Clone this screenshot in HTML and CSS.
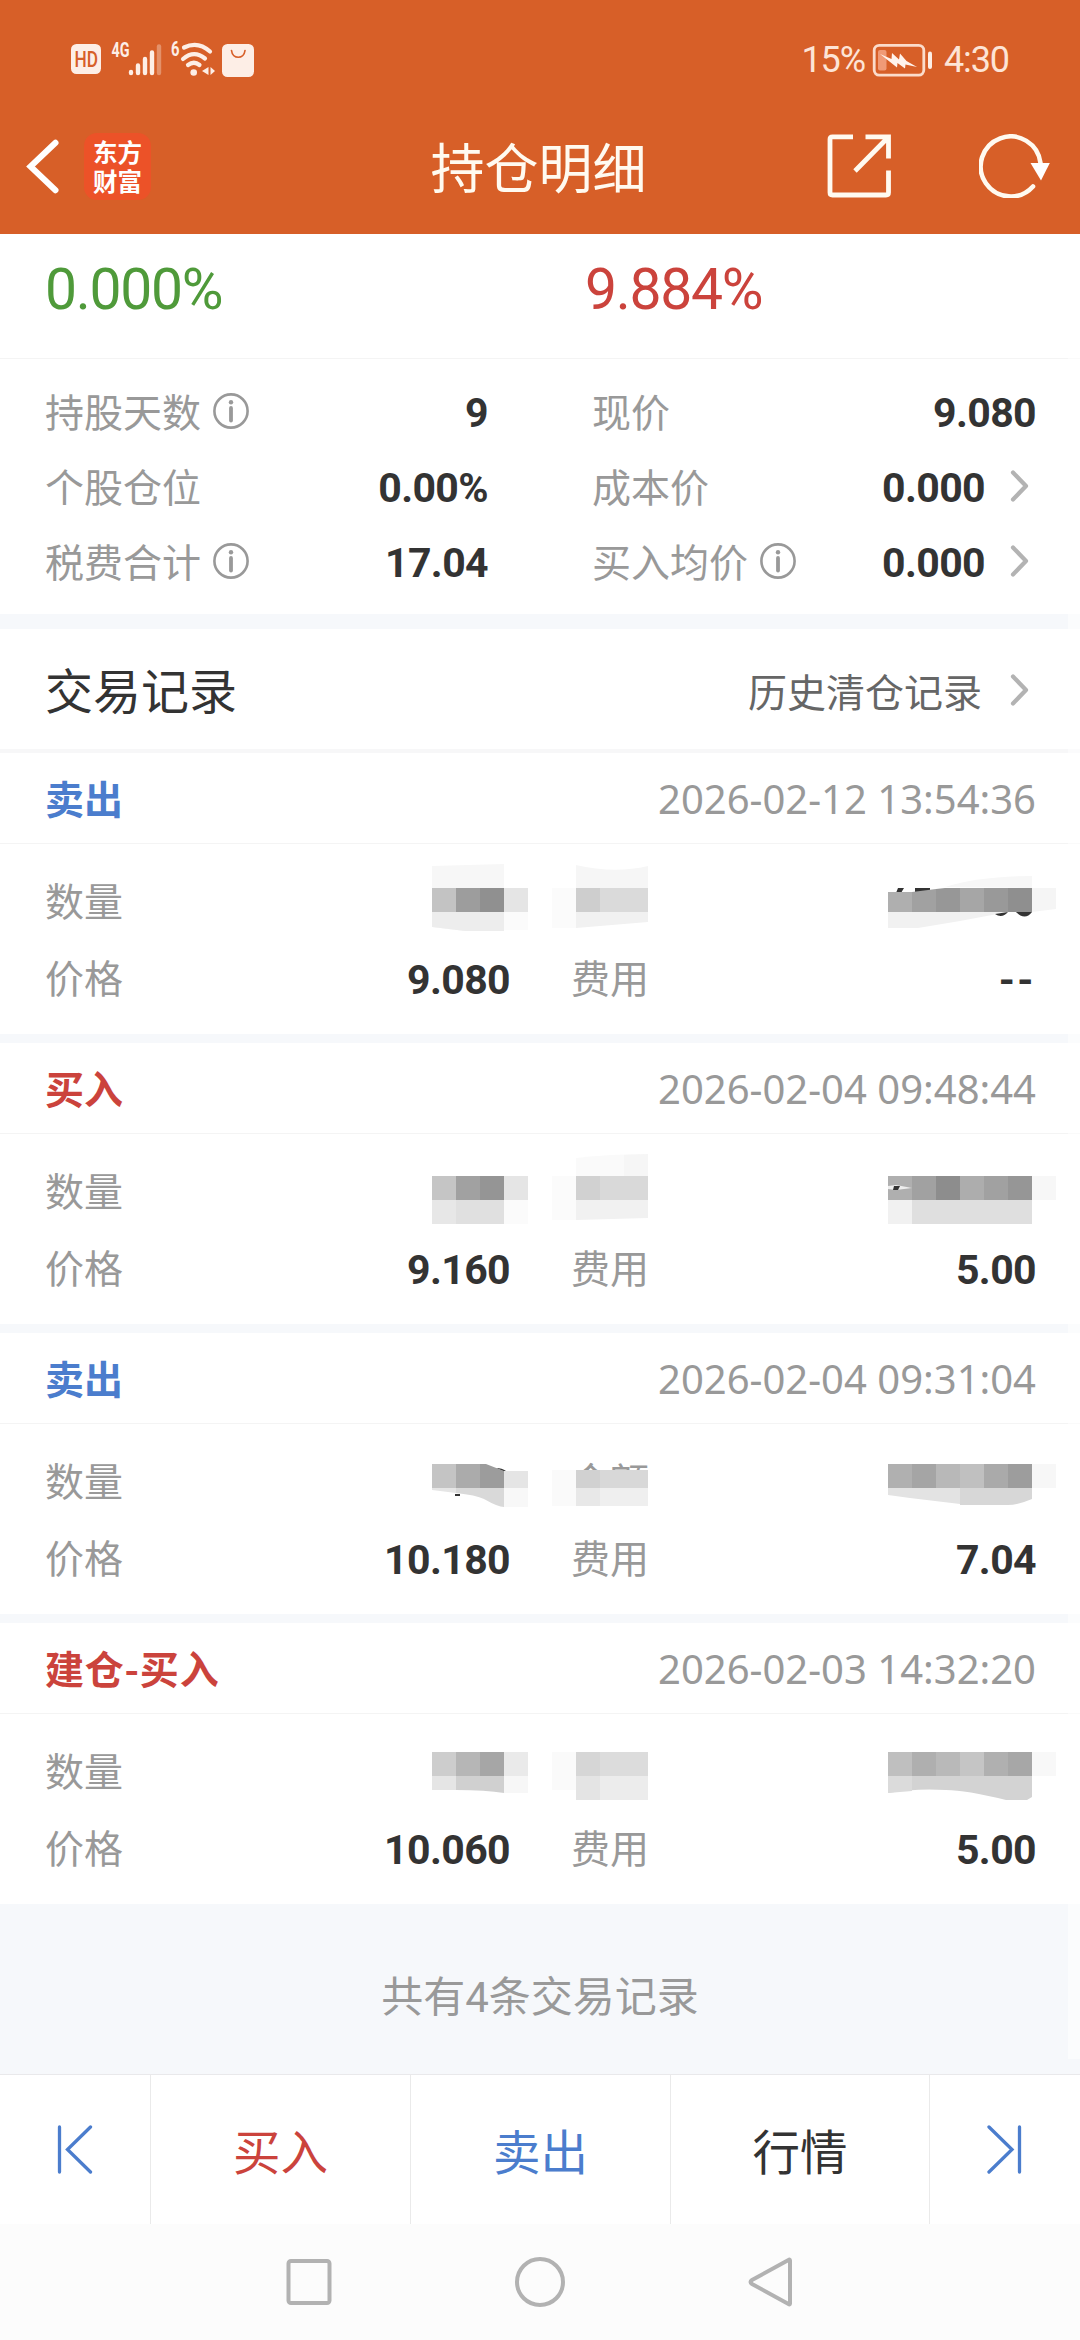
FILE: index.html
```html
<!DOCTYPE html>
<html lang="zh-CN">
<head>
<meta charset="utf-8">
<title>持仓明细</title>
<link rel="stylesheet" href="styles.css">
</head>
<body>
<svg class="defs" width="0" height="0" aria-hidden="true">
  <symbol id="chevron" viewBox="0 0 20 32"><path d="M3 2.5 16 16 3 29.5" fill="none" stroke="#b3b3b3" stroke-width="4.2" stroke-linecap="round" stroke-linejoin="round"/></symbol>
  <symbol id="info" viewBox="0 0 36 36"><circle cx="18" cy="18" r="16.6" fill="none" stroke="#999" stroke-width="2.6"/><circle cx="18" cy="9.3" r="2.2" fill="#999"/><path d="M18 15v12.500" stroke="#999" stroke-width="3.800" stroke-linecap="round"/></symbol>
</svg>

<header class="top">
  <div class="status">
    <svg class="status-left" width="190" height="50" viewBox="68 35 190 50">
      <rect x="71" y="45" width="30" height="30" rx="5.500" fill="#fdeee6"/>
      <text class="hd" x="74.500" y="67.800" textLength="23.500" lengthAdjust="spacingAndGlyphs">HD</text>
      <text class="net" x="111.500" y="58" textLength="18" lengthAdjust="spacingAndGlyphs">4G</text>
      <g stroke="#fdeee6" stroke-width="4.400" stroke-linecap="round">
        <path d="M131 73v1M138 66.500v7.500M145 60v14M152 53.500v20.500"/>
        <path d="M159 47.500v26.500" opacity=".35"/>
      </g>
      <text class="net" x="171" y="57" textLength="8.500" lengthAdjust="spacingAndGlyphs">6</text>
      <g fill="none" stroke="#fdeee6" stroke-width="4.200" stroke-linecap="round">
        <path d="M184 48.500Q198 41.500 210 52.500"/>
        <path d="M183 60Q194 50.500 205 59.500"/>
        <path d="M188 66Q194 61.500 199.500 66"/>
      </g>
      <circle cx="193.700" cy="73.500" r="3.300" fill="#fdeee6"/>
      <path d="M208.500 68v8l-6.500-4zM210.500 68v8l4.500-4z" fill="#fdeee6"/>
      <rect x="222" y="45" width="32" height="33" rx="5.500" fill="#fdeee6"/>
      <path d="M231.500 51.500c1 9 12.500 9 13.500 0" fill="none" stroke="#d75f28" stroke-width="1.700" stroke-linecap="round"/>
    </svg>
    <div class="status-right">
      <span class="pct">15%</span>
      <svg width="61" height="34" viewBox="871 42.500 61 34">
        <rect x="873.200" y="44.800" width="49.600" height="29.800" rx="5" fill="none" stroke="#fbdccb" stroke-width="2.800"/>
        <rect x="877" y="49.500" width="8.500" height="20.500" rx="2" fill="#f09a76"/>
        <path d="M879 53.500 890.500 58.500 891 52.500 898 59 899 53 905.500 60.500 916 66.500 904.500 64 904 68 896.500 62.500 896 67z" fill="#fff3ec"/>
        <path d="M929 53v13.500" stroke="#fdeee6" stroke-width="4" stroke-linecap="round"/>
      </svg>
      <span class="time">4:30</span>
    </div>
  </div>
  <div class="titlebar">
    <div class="side">
      <svg width="34" height="60" viewBox="26 136 34 60"><path d="M55.500 142.800 30.500 166.500 55.500 190.200" fill="none" stroke="#fff" stroke-width="6" stroke-linecap="round"/></svg>
      <div class="logo">东方<br>财富</div>
    </div>
    <h1>持仓明细</h1>
    <div class="side actions">
      <svg width="64" height="64" viewBox="827.500 134.500 64 64" fill="none" stroke="#fffaf0" stroke-width="4.800"><path d="M853.500 137.300H833q-2.500 0-2.500 2.500V193q0 2.500 2.500 2.500h53.500q2.500 0 2.500-2.500V171M866 137.300h23V159M887.500 139 855.500 171.500"/></svg>
      <svg width="72" height="64" viewBox="979 134 72 64"><path d="M1040.500 163A30 30 0 1 0 1033 186.500" fill="none" stroke="#fffaf0" stroke-width="4.600" stroke-linecap="round"/><path d="M1030.500 163h19.300l-8.800 17.500z" fill="#fff"/></svg>
    </div>
  </div>
</header>

<main>
  <section class="rates">
    <div class="green">0.000%</div>
    <div class="red">9.884%</div>
  </section>

  <section class="stats">
    <dl>
      <div class="row"><dt>持股天数<svg class="info"><use href="#info"/></svg></dt><dd>9</dd></div>
      <div class="row"><dt>个股仓位</dt><dd>0.00%</dd></div>
      <div class="row"><dt>税费合计<svg class="info"><use href="#info"/></svg></dt><dd>17.04</dd></div>
    </dl>
    <dl>
      <div class="row"><dt>现价</dt><dd>9.080</dd></div>
      <div class="row"><dt>成本价</dt><dd>0.000</dd><svg class="chev"><use href="#chevron"/></svg></div>
      <div class="row"><dt>买入均价<svg class="info"><use href="#info"/></svg></dt><dd>0.000</dd><svg class="chev"><use href="#chevron"/></svg></div>
    </dl>
  </section>

  <section class="history">
    <h2>交易记录</h2>
    <a class="more">历史清仓记录<svg class="chev"><use href="#chevron"/></svg></a>
  </section>

  <article class="record">
    <div class="head"><b class="sell">卖出</b><time>2026-02-12 13:54:36</time></div>
    <div class="body">
      <span>数量</span><em></em><span></span><em></em>
      <span>价格</span><em>9.080</em><span>费用</span><em class="none">--</em>
      <svg class="mask" viewBox="0 844 1080 190">
        <path d="M432 866 504 864V931H465L432 927z" fill="#f7f7f7"/>
        <path d="M432 912h72v19h-39l-33-4z" fill="#ededed"/>
        <path d="M432 888h24v24h-24z" fill="#c3c3c3"/><path d="M456 888h24v24h-24z" fill="#9d9d9d"/><path d="M480 888h24v24h-24z" fill="#909090"/><path d="M504 888h24v24h-24z" fill="#e5e5e5"/>
        <path d="M504 912h24v18h-24zM552 888h24v40h-24z" fill="#fbfbfb"/>
        <path d="M576 865q38 9 72 1v22h-72z" fill="#f6f6f6"/><path d="M576 912h72v10l-72 6z" fill="#f1f1f1"/>
        <path d="M576 888h24v24h-24z" fill="#cecece"/><path d="M600 888h48v24h-48z" fill="#dadada"/>
        <path d="M898 888h6l-3 5h-5zM915 888h15v3l-15 2z" fill="#333"/>
        <path d="M945 887Q980 876 1032 876v12z" fill="#f7f7f7"/>
        <path d="M888 912h120l-48 9-42 7h-30z" fill="#f1f1f1"/>
        <path d="M888 892h24v20h-24z" fill="#afafaf"/><path d="M912 892l24-3v23h-24z" fill="#a1a1a1"/><path d="M936 889l9-1h15v24h-24z" fill="#979797"/><path d="M960 888h24v24h-24z" fill="#a6a6a6"/><path d="M984 888h24v24h-24z" fill="#999"/><path d="M1008 888h24v24h-24z" fill="#8f8f8f"/><path d="M1032 888h24v21l-24 3z" fill="#f5f5f5"/>
        <path d="M995 914l13-2q-6 7-13 2zM1016 912h16q-7 9-16 0z" fill="#333"/>
      </svg>
    </div>
  </article>

  <article class="record">
    <div class="head"><b class="buy">买入</b><time>2026-02-04 09:48:44</time></div>
    <div class="body">
      <span>数量</span><em></em><span></span><em></em>
      <span>价格</span><em>9.160</em><span>费用</span><em>5.00</em>
      <svg class="mask" viewBox="0 1134 1080 190">
        <path d="M432 1176h24v24h-24z" fill="#c5c5c5"/><path d="M456 1176h24v24h-24z" fill="#a1a1a1"/><path d="M480 1176h24v24h-24z" fill="#959595"/><path d="M504 1176h24v24h-24z" fill="#e5e5e5"/>
        <path d="M432 1200h24v24h-24z" fill="#e7e7e7"/><path d="M456 1200h48v24h-48z" fill="#e0e0e0"/><path d="M504 1200h24v24h-24zM552 1176h24v44h-24z" fill="#fbfbfb"/>
        <path d="M576 1158q35-4 72-4v22h-72z" fill="#fafafa"/><path d="M624 1155l24-1v22h-24z" fill="#f6f6f6"/>
        <path d="M576 1176h24v24h-24z" fill="#d1d1d1"/><path d="M600 1176h48v24h-48z" fill="#d9d9d9"/><path d="M576 1200h72v18l-72 2z" fill="#f1f1f1"/>
        <path d="M888 1176h24v24h-24z" fill="#afafaf"/><path d="M912 1176h24v24h-24z" fill="#a1a1a1"/><path d="M936 1176h24v24h-24z" fill="#8d8d8d"/><path d="M960 1176h24v24h-24z" fill="#adadad"/><path d="M984 1176h24v24h-24z" fill="#a1a1a1"/><path d="M1008 1176h24v24h-24z" fill="#969696"/><path d="M1032 1176h24v24h-24z" fill="#f7f7f7"/>
        <path d="M888 1200h24v24h-24z" fill="#f1f1f1"/><path d="M912 1200h120v24h-120z" fill="#dfdfdf"/>
        <path d="M888 1186l8-1 16 3-16 2-8-1z" fill="#eee"/><path d="M894 1186h6l-2 4h-5z" fill="#333"/>
      </svg>
    </div>
  </article>

  <article class="record">
    <div class="head"><b class="sell">卖出</b><time>2026-02-04 09:31:04</time></div>
    <div class="body">
      <span>数量</span><em></em><span>金额</span><em></em>
      <span>价格</span><em>10.180</em><span>费用</span><em>7.04</em>
      <svg class="mask" viewBox="0 1424 1080 190">
        <path d="M496 1468q6 0 10 3l-1 1z" fill="#333"/><path d="M455 1494h5v2h-5z" fill="#333"/>
        <path d="M432 1464h24v24h-24z" fill="#c4c4c4"/><path d="M456 1464h24v24h-24z" fill="#ababab"/><path d="M480 1464h6l18 7v17h-24z" fill="#9c9c9c"/><path d="M504 1471h24v17h-24z" fill="#e5e5e5"/>
        <path d="M432 1488h24v5l-24-3z" fill="#e5e5e5"/><path d="M456 1488h48v19q-6 0-20-8-8-4-28-6z" fill="#d9d9d9"/><path d="M504 1488h24v19h-24z" fill="#f8f8f8"/>
        <path d="M565 1470h97v46h-97z" fill="#fff"/><path d="M552 1470h24v36h-24z" fill="#fafafa"/>
        <path d="M576 1470h24v18h-24z" fill="#d1d1d1"/><path d="M600 1470h48v18h-48z" fill="#d8d8d8"/><path d="M576 1488h24v18h-24z" fill="#e8e8e8"/><path d="M600 1488h48v18h-48z" fill="#efefef"/>
        <path d="M888 1464h24v24h-24z" fill="#b0b0b0"/><path d="M912 1464h24v24h-24z" fill="#a5a5a5"/><path d="M936 1464h24v24h-24z" fill="#b8b8b8"/><path d="M960 1464h24v24h-24z" fill="#c0c0c0"/><path d="M984 1464h24v24h-24z" fill="#aaa"/><path d="M1008 1464h24v24h-24z" fill="#9d9d9d"/><path d="M1032 1464h24v24h-24z" fill="#f7f7f7"/>
        <path d="M888 1488h72v16l-50-6-22-3z" fill="#e3e3e3"/><path d="M960 1488h72v11q-14 6-24 6h-48z" fill="#d7d7d7"/>
      </svg>
    </div>
  </article>

  <article class="record">
    <div class="head"><b class="buy open">建仓-买入</b><time>2026-02-03 14:32:20</time></div>
    <div class="body">
      <span>数量</span><em></em><span></span><em></em>
      <span>价格</span><em>10.060</em><span>费用</span><em>5.00</em>
      <svg class="mask" viewBox="0 1714 1080 190">
        <path d="M432 1752h24v24h-24z" fill="#cdcdcd"/><path d="M456 1752h24v24h-24z" fill="#b6b6b6"/><path d="M480 1752h24v24h-24z" fill="#a6a6a6"/><path d="M504 1752h24v24h-24z" fill="#eaeaea"/>
        <path d="M432 1776h24v14h-24z" fill="#e5e5e5"/><path d="M456 1776h48v17q-18-3-48-3z" fill="#d0d0d0"/><path d="M504 1776h24v17h-24z" fill="#f7f7f7"/><path d="M552 1752h24v38h-24z" fill="#fafafa"/>
        <path d="M576 1752h24v24h-24z" fill="#d6d6d6"/><path d="M600 1752h48v24h-48z" fill="#dcdcdc"/><path d="M576 1776h24v24h-24z" fill="#e4e4e4"/><path d="M600 1776h48v24h-48z" fill="#ececec"/>
        <path d="M888 1752h24v24h-24z" fill="#bfbfbf"/><path d="M912 1752h24v24h-24z" fill="#afafaf"/><path d="M936 1752h24v24h-24z" fill="#b9b9b9"/><path d="M960 1752h24v24h-24z" fill="#c5c5c5"/><path d="M984 1752h24v24h-24z" fill="#b0b0b0"/><path d="M1008 1752h24v24h-24z" fill="#a7a7a7"/><path d="M1032 1752h24v24h-24z" fill="#f8f8f8"/>
        <path d="M888 1776h144v21l-5 3h-21q-40-10-60-10-30-2-58 3z" fill="#d3d3d3"/><path d="M888 1776h24v15l-24 2z" fill="#dbdbdb"/>
      </svg>
    </div>
  </article>

  <p class="total">共有4条交易记录</p>
  <div class="scrolltrack"></div>
</main>

<nav class="trade">
  <a><svg width="40" height="50" viewBox="56 2123 40 50"><path d="M60.500 2125v45M91.500 2125 68.500 2147.500 91.500 2170"/></svg></a>
  <a class="red">买入</a>
  <a class="blue">卖出</a>
  <a>行情</a>
  <a><svg width="40" height="50" viewBox="986 2123 40 50"><path d="M1020.500 2125v45M990 2125 1013 2147.500 990 2170"/></svg></a>
</nav>

<footer class="system">
  <svg width="50" height="54" viewBox="284 2255 50 54"><rect x="288.500" y="2261" width="41" height="42" rx="2.500"/></svg>
  <svg width="54" height="54" viewBox="513 2255 54 54"><circle cx="540" cy="2282" r="23"/></svg>
  <svg width="50" height="54" viewBox="744 2255 50 54"><path d="M788 2260.500v43q0 1.500-1.500.5l-36.500-20q-3-2 0-4l36.500-20q1.500-1 1.500.5z"/></svg>
</footer>
</body>
</html>
```

FILE: styles.css
```css
* { box-sizing: border-box; margin: 0; padding: 0; }
body {
  width: 1080px;
  height: 2340px;
  background: #fff;
  color: #333;
  font-family: "Noto Sans CJK SC", "Noto Sans", sans-serif;
  font-size: 39px;
}
svg { display: block; flex: none; }
.defs { position: absolute; }
em, dd { font-style: normal; font-weight: 700; font-family: Roboto, sans-serif; font-size: 41px; letter-spacing: -0.6px; }

/* status and title bars */
.top { height: 234px; background: #d75f28; color: #fffaf0; }
.status { display: flex; justify-content: space-between; height: 100px; padding: 34px 71px 0 68px; }
.hd { font: 500 22px Roboto, sans-serif; fill: #d75f28; }
.net { font: 700 20px Roboto, sans-serif; fill: #fdeee6; }
.status-right { display: flex; align-items: center; height: 52px; font-family: Roboto, sans-serif; font-size: 36px; letter-spacing: -1.1px; color: #fde4d6; }
.status-right svg { margin: 0 11px 0 7px; }
.titlebar { display: flex; justify-content: space-between; align-items: center; height: 134px; padding: 0 29px 2px 26px; }
.side { display: flex; align-items: center; width: 224px; }
.logo { width: 67px; height: 67px; margin-left: 24px; padding-top: 4px; border-radius: 13px; background: #ec5228; color: #fff; font-weight: 700; font-size: 24.500px; line-height: 29px; text-align: center; }
h1 { font-weight: 400; font-size: 54px; line-height: 80px; }
.actions { justify-content: space-between; }

/* summary */
main { position: relative; }
.rates { display: grid; grid-template-columns: 540px 540px; height: 125px; padding: 0 0 14px 45px; align-items: center; border-bottom: 1px solid #f4f4f4; font-family: Roboto, sans-serif; font-size: 57px; letter-spacing: -1.3px; }
.green { color: #4f9a3a; }
.red { color: #cb433c; }
.stats { display: grid; grid-template-columns: 443px 444px; justify-content: space-between; height: 270px; padding: 13px 44px 0 45px; border-bottom: 15px solid #f6f8fb; }
.row { display: flex; align-items: center; height: 75px; }
dt { display: flex; align-items: center; color: #999; line-height: 56px; }
dd { margin: 6px 0 0 auto; }
.info { width: 36px; height: 36px; margin: 3px 0 0 12px; }
.chev { width: 20px; height: 32px; margin: 2px 6px 0 25px; }
.history { display: flex; justify-content: space-between; height: 124px; padding: 0 44px 2px 45px; align-items: center; border-bottom: 4px solid #f7f7f8; }
h2 { font-weight: 400; font-size: 48px; }
.more { display: flex; align-items: center; padding-top: 4px; color: #666; }
.history .chev { margin: 0 6px 0 28px; }

/* trade records */
.record { height: 290px; border-bottom: 9px solid #f6f8fb; }
.record:last-of-type { height: 281px; border-bottom: 0; }
.head { display: flex; justify-content: space-between; align-items: center; height: 91px; padding: 0 44px 0 45px; border-bottom: 1px solid #f4f4f4; }
.head b { padding-bottom: 2px; }
.open { letter-spacing: 0.8px; }
.sell { color: #4b7dcd; }
.buy { color: #cb433c; }
time { color: #999; font-family: "Noto Sans", sans-serif; font-size: 40px; }
.body { position: relative; display: grid; grid-template-columns: 165px 300px 165px auto; grid-template-rows: 77px 77px; align-items: center; padding: 17px 44px 19px 45px; }
.body span { color: #999; padding-bottom: 1px; }
.body span:nth-of-type(even) { padding-left: 61px; }
.body em { margin-top: 6px; text-align: right; }
.body .none { letter-spacing: 2.500px; }
.mask { position: absolute; inset: 0; width: 1080px; height: 190px; }
.total { height: 170px; padding-top: 64px; background: #f6f8fb; color: #999; text-align: center; font-family: Roboto, "Noto Sans CJK SC", sans-serif; font-size: 42px; line-height: 60px; }
.scrolltrack { position: absolute; top: 0; right: 0; width: 12px; height: 1825px; background: rgba(255, 255, 255, .5); }

/* bottom bars */
.trade { display: grid; grid-template-columns: 151px 260px 260px 259px 150px; height: 150px; border-top: 1px solid #e9e9eb; font-size: 47.500px; }
.trade a { display: flex; align-items: center; justify-content: center; border-right: 1px solid #eaeaea; }
.trade a:last-child { border-right: 0; }
.trade svg { fill: none; stroke: #4b7dcd; stroke-width: 3.300px; stroke-linecap: round; }
.blue { color: #4b7dcd; }
.system { display: flex; justify-content: center; gap: 179px; height: 116px; padding: 31px 0 0; background: #fcfcfc; }
.system svg { fill: none; stroke: #b2b2b2; stroke-width: 4px; stroke-linejoin: round; }
```
